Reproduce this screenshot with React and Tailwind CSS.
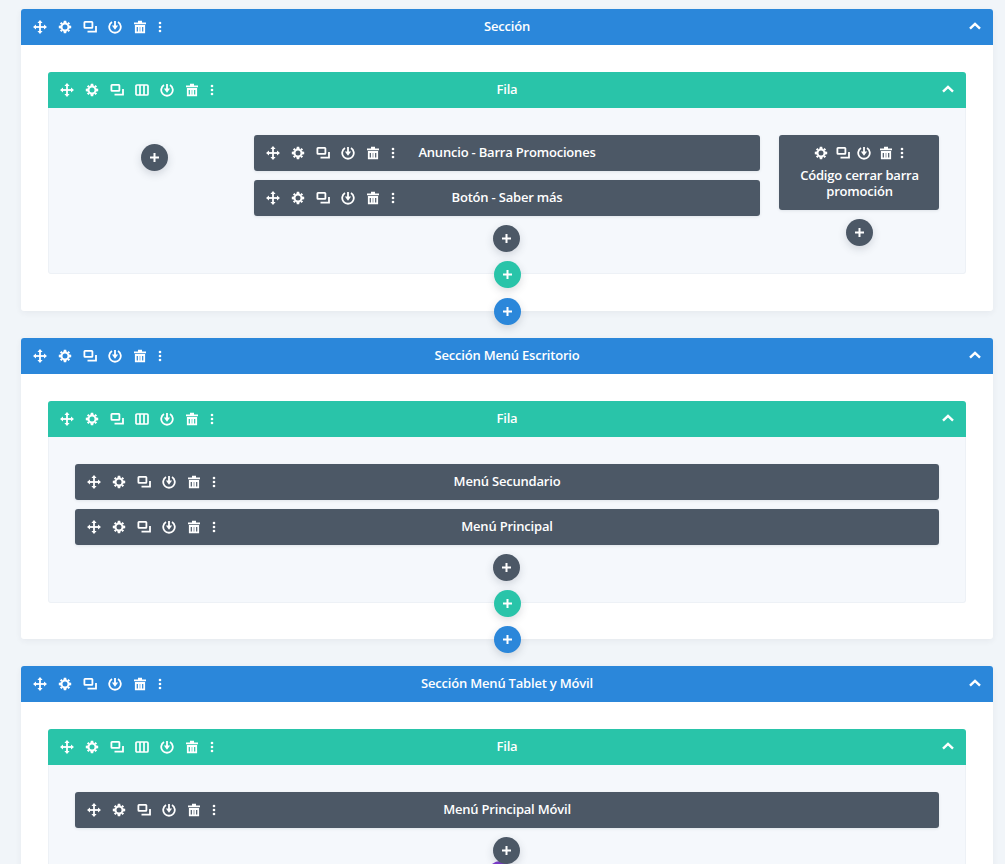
function IconMove() {
    return (
        <svg width="14" height="14" viewBox="0 0 14 14" fill="white">
            <rect x="6.1" y="2" width="1.8" height="10" />
            <rect x="2" y="6.1" width="10" height="1.8" />
            <path d="M7 0 L9.6 3 H4.4 Z M7 14 L9.6 11 H4.4 Z M0 7 L3 4.4 V9.6 Z M14 7 L11 4.4 V9.6 Z" />
        </svg>
    );
}

function IconGear() {
    return (
        <svg width="14" height="14" viewBox="0 0 14 14" fill="none">
            <circle cx="7" cy="7" r="3.5" stroke="white" strokeWidth="2" />
            <path
                d="M5.8 0.8 H8.2 L8.6 3 H5.4 Z M5.8 13.2 H8.2 L8.6 11 H5.4 Z M0.8 5.8 V8.2 L3 8.6 V5.4 Z M13.2 5.8 V8.2 L11 8.6 V5.4 Z M1.9 3.5 L3.5 1.9 L4.7 3.2 L3.2 4.7 Z M12.1 3.5 L10.5 1.9 L9.3 3.2 L10.8 4.7 Z M1.9 10.5 L3.5 12.1 L4.7 10.8 L3.2 9.3 Z M12.1 10.5 L10.5 12.1 L9.3 10.8 L10.8 9.3 Z"
                fill="white"
            />
        </svg>
    );
}

function IconCopy() {
    return (
        <svg width="14" height="14" viewBox="0 0 14 14" fill="none" stroke="white" strokeWidth="1.8">
            <rect x="1.4" y="1.9" width="8" height="6" rx="0.6" />
            <path d="M13 6 V11.6 H4.5" />
        </svg>
    );
}

function IconColumns() {
    return (
        <svg width="14" height="14" viewBox="0 0 14 14" fill="none" stroke="white" strokeWidth="1.7">
            <rect x="1" y="2" width="12" height="10" rx="1" />
            <path d="M5 2 V12 M9 2 V12" />
        </svg>
    );
}

function IconPower() {
    return (
        <svg width="14" height="14" viewBox="0 0 14 14" fill="none" stroke="white" strokeWidth="1.8">
            <path d="M4 2 A5.8 5.8 0 1 0 10 2" />
            <path d="M7 1 V6.5" />
            <path d="M3.9 5.4 L7 9.8 L10.1 5.4 Z" fill="white" stroke="none" />
        </svg>
    );
}

function IconTrash() {
    return (
        <svg width="14" height="14" viewBox="0 0 14 14" fill="none">
            <path d="M5 0.8 H9 V2.4 H13 V4.2 H1 V2.4 H5 Z" fill="white" />
            <path d="M2.8 6 H11.2 V12.4 H2.8 Z M5.8 7 V11.4 M8.2 7 V11.4" stroke="white" strokeWidth="1.8" />
        </svg>
    );
}

function IconDots() {
    return (
        <svg width="4" height="14" viewBox="0 0 4 14" fill="white">
            <circle cx="2" cy="3" r="1.3" />
            <circle cx="2" cy="7" r="1.3" />
            <circle cx="2" cy="11" r="1.3" />
        </svg>
    );
}

function Chevron({ className }) {
    return (
        <svg width="12" height="8" viewBox="0 0 12 8" fill="none" stroke="white" strokeWidth="2.4" className={className}>
            <path d="M1 6.6 L6 1.8 L11 6.6" />
        </svg>
    );
}

const ICONS = {
    move: IconMove,
    gear: IconGear,
    copy: IconCopy,
    columns: IconColumns,
    power: IconPower,
    trash: IconTrash,
    dots: IconDots,
};

function Toolbar({ items, className }) {
    return (
        <div className={className}>
            {items.map((name) => {
                const Icon = ICONS[name];
                return (
                    <span key={name} className="flex items-center justify-center">
                        <Icon />
                    </span>
                );
            })}
        </div>
    );
}

function AddButton({ color, className = "" }) {
    return (
        <button
            className={`relative z-10 flex size-[27px] shrink-0 items-center justify-center rounded-full shadow-[0_3px_8px_rgba(43,56,72,0.18)] ${color} ${className}`}
        >
            <svg width="9" height="9" viewBox="0 0 9 9" fill="white">
                <rect x="3.5" y="0" width="2" height="9" />
                <rect x="0" y="3.5" width="9" height="2" />
            </svg>
        </button>
    );
}

function Module({ title }) {
    return (
        <div className="relative flex h-9 items-center justify-center rounded-[3px] bg-[#4c5866] shadow-[0_1px_3px_rgba(43,56,72,0.1)]">
            <Toolbar
                items={["move", "gear", "copy", "power", "trash", "dots"]}
                className="absolute left-3 top-0 flex h-full items-center gap-[11px]"
            />
            <span className="text-[13px] font-semibold tracking-[-0.2px] text-white">{title}</span>
        </div>
    );
}

function CodeModule({ title }) {
    return (
        <div className="flex h-[75px] flex-col items-center rounded-[3px] bg-[#4c5866] pt-[11px] shadow-[0_1px_3px_rgba(43,56,72,0.1)]">
            <Toolbar items={["gear", "copy", "power", "trash", "dots"]} className="flex h-[14px] items-center gap-[7.5px]" />
            <p className="mt-[7px] w-[130px] pl-px text-center text-[13px] font-semibold leading-4 tracking-[-0.2px] text-white">
                {title}
            </p>
        </div>
    );
}

function Row({ children }) {
    return (
        <div className="relative">
            <div className="relative flex h-9 items-center justify-center rounded-t-[3px] bg-[#29c4a9]">
                <Toolbar
                    items={["move", "gear", "copy", "columns", "power", "trash", "dots"]}
                    className="absolute left-3 top-0 flex h-full items-center gap-[11px]"
                />
                <span className="text-[13px] font-semibold tracking-[-0.2px] text-white">Fila</span>
                <Chevron className="absolute right-3 top-[13px]" />
            </div>
            <div className="rounded-b-[3px] border border-t-0 border-[#edf1f6] bg-[#f5f8fc] px-[26px] pb-[21px] pt-[27px]">
                {children}
            </div>
            <div className="-mt-[13px] flex justify-center">
                <AddButton color="bg-[#29c4a9]" />
            </div>
        </div>
    );
}

function Section({ title, children, footerGap = "mt-[10px]" }) {
    return (
        <section className="rounded-[3px] bg-white shadow-[0_2px_6px_rgba(43,56,72,0.06)]">
            <div className="relative flex h-9 items-center justify-center rounded-t-[3px] bg-[#2b87da]">
                <Toolbar
                    items={["move", "gear", "copy", "power", "trash", "dots"]}
                    className="absolute left-3 top-0 flex h-full items-center gap-[11px]"
                />
                <span className="text-[13px] font-semibold tracking-[-0.2px] text-white">{title}</span>
                <Chevron className="absolute right-3 top-[13px]" />
            </div>
            <div className="px-[27px] pt-[27px]">{children}</div>
            <div className={`-mb-[14px] flex justify-center ${footerGap}`}>
                <AddButton color="bg-[#2b87da]" />
            </div>
        </section>
    );
}

function Column({ children }) {
    return <div className="flex min-w-0 flex-col items-stretch gap-[9px]">{children}</div>;
}

function ModuleAdd({ className = "mr-px" }) {
    return (
        <div className="flex justify-center">
            <AddButton color="bg-[#4c5866]" className={className} />
        </div>
    );
}

function App() {
    return (
        <div
            className="h-[864px] overflow-hidden bg-[#f1f5f9] pl-[21px] pr-3 pt-[9px] text-white"
            style={{ fontFamily: '"Open Sans", sans-serif' }}
        >
            <div className="flex flex-col gap-[27px]">
                <Section title="Sección">
                    <Row>
                        <div className="grid grid-cols-[160px_506px_160px] gap-x-[19px]">
                            <Column>
                                <div className="flex justify-center pt-[9px]">
                                    <AddButton color="bg-[#4c5866]" className="mr-px" />
                                </div>
                            </Column>
                            <Column>
                                <Module title="Anuncio - Barra Promociones" />
                                <Module title="Botón - Saber más" />
                                <ModuleAdd />
                            </Column>
                            <Column>
                                <CodeModule title="Código cerrar barra promoción" />
                                <ModuleAdd className="" />
                            </Column>
                        </div>
                    </Row>
                </Section>

                <Section title="Sección Menú Escritorio" footerGap="mt-[9px]">
                    <Row>
                        <Column>
                            <Module title="Menú Secundario" />
                            <Module title="Menú Principal" />
                            <ModuleAdd />
                        </Column>
                    </Row>
                </Section>

                <Section title="Sección Menú Tablet y Móvil">
                    <Row>
                        <Column>
                            <Module title="Menú Principal Móvil" />
                            <ModuleAdd />
                            {/* purple button just peeking out under the fold */}
                            <div className="-mt-[12px] flex justify-center">
                                <div className="mr-[13px] size-[27px] rounded-full bg-[#7e3bd0]" />
                            </div>
                        </Column>
                    </Row>
                </Section>
            </div>
        </div>
    );
}

export default App;
